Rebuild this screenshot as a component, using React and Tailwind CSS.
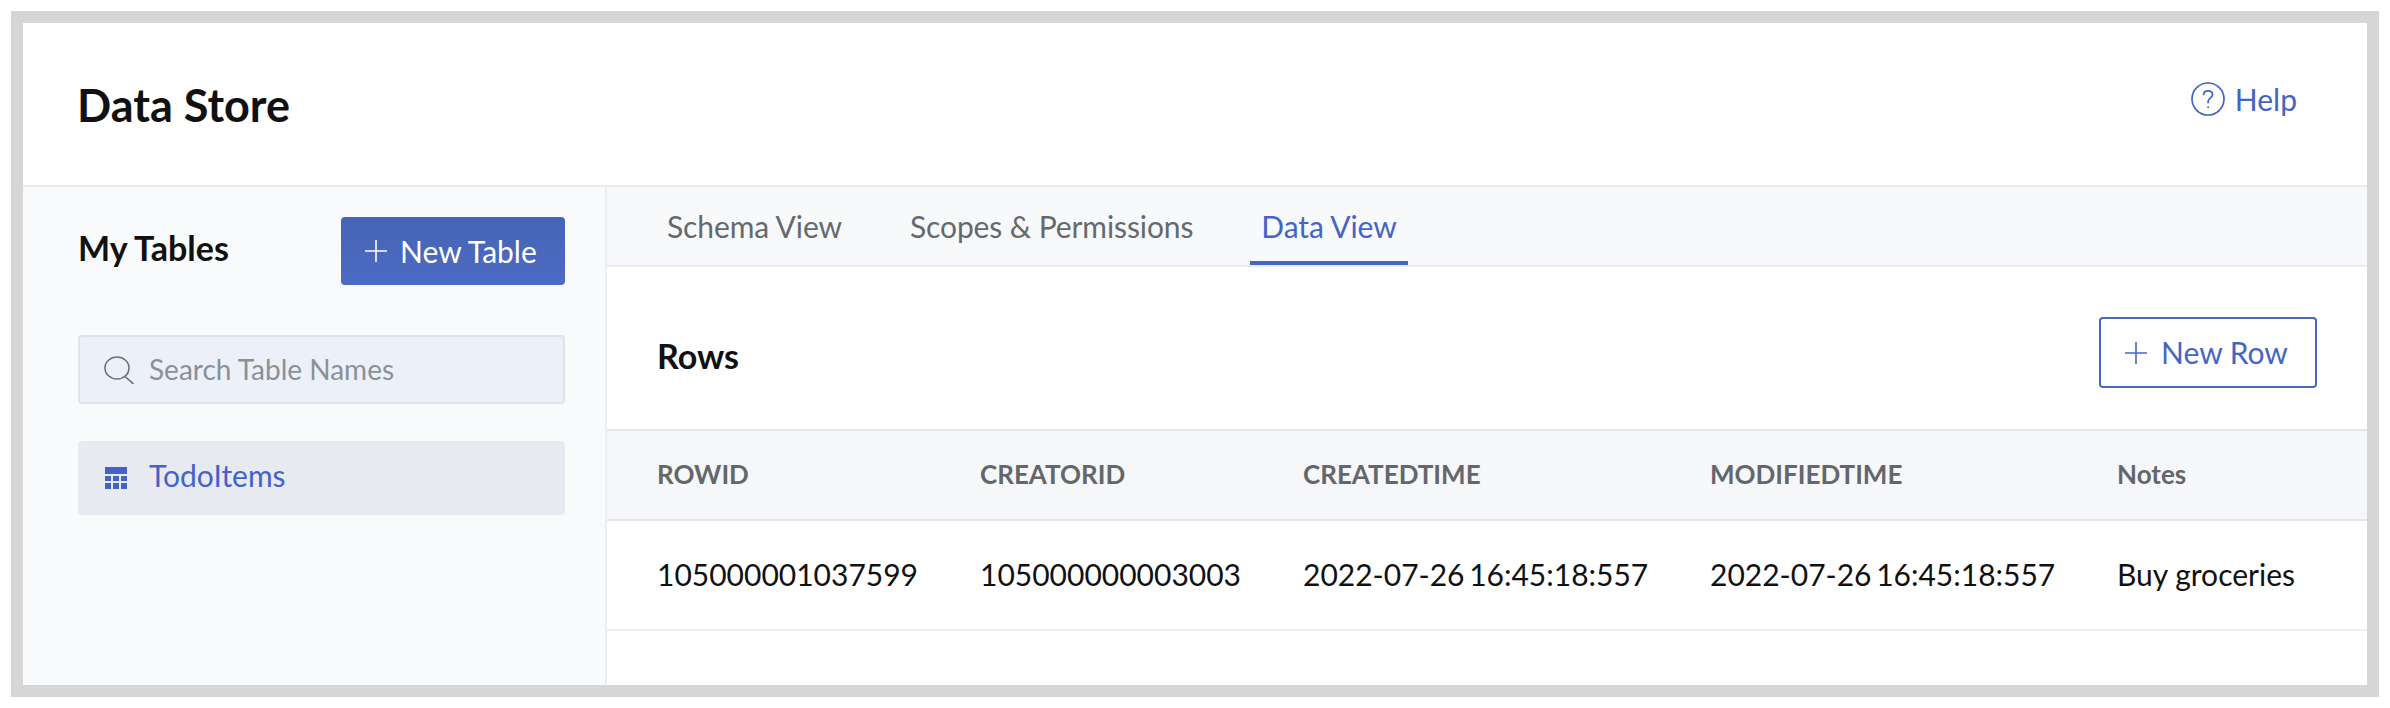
const COLUMNS = ["ROWID", "CREATORID", "CREATEDTIME", "MODIFIEDTIME", "Notes"];
const ROW = [
  "105000001037599",
  "105000000003003",
  "2022-07-26 16:45:18:557",
  "2022-07-26 16:45:18:557",
  "Buy groceries",
];

function PlusIcon({ className }) {
  return (
    <svg viewBox="0 0 22 22" className={className} fill="none" stroke="currentColor" strokeWidth="1.6">
      <path d="M11 0v22M0 11h22" />
    </svg>
  );
}

function SearchIcon({ className }) {
  return (
    <svg viewBox="0 0 30 28" className={className} fill="none" stroke="currentColor" strokeWidth="1.6">
      <ellipse cx="13" cy="12" rx="12" ry="11" />
      <path d="M21 20.5l8.5 7.5" />
    </svg>
  );
}

function HelpIcon({ className }) {
  return (
    <svg viewBox="0 0 34 34" className={className} fill="none" stroke="currentColor" strokeWidth="1.7">
      <circle cx="17" cy="17" r="16" />
      <path d="M12.5 13.2c0-2.8 2-4.4 4.6-4.4 2.5 0 4.4 1.5 4.4 3.8 0 3.4-4.4 3.5-4.4 7.2v1.4" />
      <circle cx="17.1" cy="25.2" r="1" fill="currentColor" stroke="none" />
    </svg>
  );
}

function TableIcon({ className }) {
  return (
    <svg viewBox="0 0 22 22" className={className} fill="currentColor">
      <rect x="0" y="0" width="22" height="7" />
      <rect x="0" y="9" width="6" height="5" />
      <rect x="8" y="9" width="6" height="5" />
      <rect x="16" y="9" width="6" height="5" />
      <rect x="0" y="16" width="6" height="6" />
      <rect x="8" y="16" width="6" height="6" />
      <rect x="16" y="16" width="6" height="6" />
    </svg>
  );
}

function Tab({ label, active }) {
  return (
    <div
      className={`h-full flex items-center px-[11px] pt-[4px] border-b-4 text-[30px] tracking-[-0.1px] ${
        active ? "border-[#4766c4] text-[#4565c5]" : "border-transparent text-[#65696e]"
      }`}
    >
      {label}
    </div>
  );
}

function TableGrid() {
  return (
    <div>
      <div className="grid grid-cols-[323px_323px_407px_407px_1fr] h-[90px] pl-[50px] pb-[2px] items-center bg-[#f6f7f9] border-b-2 border-[#e3e5eb]">
        {COLUMNS.map((name) => (
          <div key={name} className="text-[26px] font-bold text-[#63676c]">
            {name}
          </div>
        ))}
      </div>
      <div className="grid grid-cols-[323px_323px_407px_407px_1fr] h-[110px] pl-[50px] pb-[2px] items-center border-b-2 border-[#eceef1]">
        {ROW.map((value, i) => (
          <div
            key={i}
            className={`text-[30px] text-[#111111] whitespace-nowrap ${
              i === 2 || i === 3 ? "[word-spacing:-3px]" : ""
            }`}
          >
            {value}
          </div>
        ))}
      </div>
    </div>
  );
}

export default function App() {
  return (
    <div className="h-[708px] bg-white p-[11px] font-['Lato',sans-serif]">
      <div className="h-full border-[12px] border-[#d6d6d6] bg-white flex flex-col overflow-hidden">
        <header className="h-[164px] shrink-0 flex justify-between border-b-2 border-[#e9ebef] pl-[54px] pr-[70px]">
          <h1 className="mt-[52px] text-[45px] leading-[60px] font-bold text-[#111111]">Data Store</h1>
          <a className="mt-[59px] h-[34px] flex items-center gap-[10px] text-[30px] text-[#4565c5]">
            <HelpIcon className="w-[34px] h-[34px]" />
            Help
          </a>
        </header>

        <div className="flex-1 flex min-h-0">
          <aside className="w-[584px] shrink-0 bg-[#f9fafc] border-r-2 border-[#eceef2] pl-[55px] pr-[40px] pt-[30px]">
            <div className="flex justify-between items-center">
              <h2 className="mb-[8px] text-[34px] font-bold text-[#111111]">My Tables</h2>
              <button className="w-[224px] h-[68px] flex items-center gap-[13px] pl-[24px] rounded bg-linear-to-b from-[#4765b6] to-[#4b6ac2] text-[30px] text-white">
                <PlusIcon className="w-[22px] h-[22px]" />
                New Table
              </button>
            </div>
            <div className="mt-[50px] h-[69px] flex items-center gap-[15px] pl-[24px] rounded bg-[#ecf0f8] border-2 border-[#dfe3ea] text-[28px] text-[#8b9098]">
              <SearchIcon className="w-[30px] h-[28px] text-[#6d7278]" />
              <span className="mb-[1px]">Search Table Names</span>
            </div>
            <div className="mt-[37px] h-[74px] flex items-center gap-[22px] pl-[27px] rounded bg-[#e8eaf1] text-[30px] text-[#4463c8]">
              <TableIcon className="w-[22px] h-[22px]" />
              <span className="mb-[5px]">TodoItems</span>
            </div>
          </aside>

          <main className="flex-1 min-w-0">
            <nav className="h-[80px] flex gap-[46px] pl-[49px] bg-[#f8f9fb] border-b-2 border-[#e9ebf0]">
              <Tab label="Schema View" />
              <Tab label="Scopes & Permissions" />
              <Tab label="Data View" active />
            </nav>

            <div className="h-[164px] flex justify-between items-start pl-[50px] pr-[50px] pt-[50px] border-b-2 border-[#e3e5eb]">
              <h2 className="mt-[13px] text-[34px] font-bold text-[#111111]">Rows</h2>
              <button className="w-[218px] h-[71px] flex items-center gap-[14px] pl-[24px] rounded border-2 border-[#4a69b8] text-[30px] text-[#4565c5]">
                <PlusIcon className="w-[22px] h-[22px]" />
                New Row
              </button>
            </div>

            <TableGrid />
          </main>
        </div>
      </div>
    </div>
  );
}
